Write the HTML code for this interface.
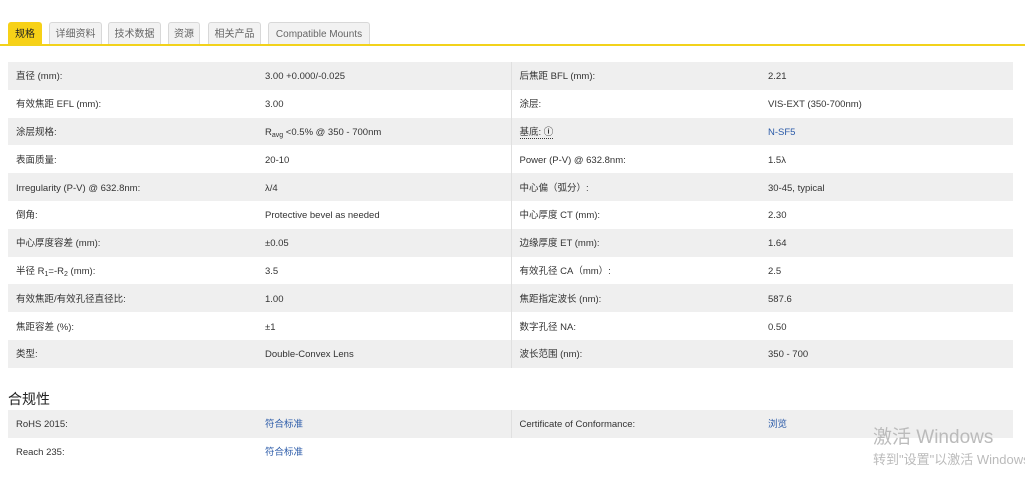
<!DOCTYPE html>
<html><head><meta charset="utf-8"><style>
body{margin:0;background:#fff;font-family:"Liberation Sans","Noto Sans CJK SC",sans-serif;font-size:9.5px;color:#333;width:1025px;height:488px;overflow:hidden;position:relative}
.tabs{position:absolute;top:22px;left:8px;height:23px}
.tab{position:absolute;top:0;height:22px;line-height:24px;background:#f2f2f2;border:1px solid #d8d8d8;border-bottom:none;border-radius:3px 3px 0 0;color:#666;font-size:10px;text-align:center;box-sizing:border-box}
.tab.a{background:#f7d117;border-color:#f7d117;color:#222}
.line{position:absolute;top:44px;left:0;width:1025px;height:2px;background:#f2d21b}
table{position:absolute;left:8px;width:1005px;border-collapse:collapse;table-layout:fixed}
td{height:27.8px;padding:3px 0 0 8px;box-sizing:border-box;white-space:nowrap;overflow:hidden;vertical-align:middle;line-height:12px}
sub{font-size:7px;vertical-align:-2px;line-height:0}
tr:nth-child(odd) td{background:#efefef}
td:nth-child(3){border-left:1px solid #e0e0e0}
a{color:#2a5aa8;text-decoration:none}
h3{position:absolute;left:8px;top:389px;margin:0;font-size:14px;font-weight:normal;color:#222}
.wm{position:absolute;left:873px;color:#bbb}
</style></head><body>
<div class="tabs">
<div class="tab a" style="left:0;width:34px">规格</div>
<div class="tab" style="left:41px;width:53px">详细资料</div>
<div class="tab" style="left:100px;width:53px">技术数据</div>
<div class="tab" style="left:160px;width:32px">资源</div>
<div class="tab" style="left:200px;width:53px">相关产品</div>
<div class="tab" style="left:260px;width:102px">Compatible Mounts</div>
</div>
<div class="line"></div>
<table style="top:62px">
<colgroup><col style="width:249px"><col style="width:254px"><col style="width:249px"><col></colgroup>
<tr><td>直径 (mm):</td><td>3.00 +0.000/-0.025</td><td>后焦距 BFL (mm):</td><td>2.21</td></tr>
<tr><td>有效焦距 EFL (mm):</td><td>3.00</td><td>涂层:</td><td>VIS-EXT (350-700nm)</td></tr>
<tr><td>涂层规格:</td><td>R<sub>avg</sub> &lt;0.5% @ 350 - 700nm</td><td><span style="border-bottom:1px dotted #333">基底: <b>ⓘ</b></span></td><td><a>N-SF5</a></td></tr>
<tr><td>表面质量:</td><td>20-10</td><td>Power (P-V) @ 632.8nm:</td><td>1.5λ</td></tr>
<tr><td>Irregularity (P-V) @ 632.8nm:</td><td>λ/4</td><td>中心偏（弧分）:</td><td>30-45, typical</td></tr>
<tr><td>倒角:</td><td>Protective bevel as needed</td><td>中心厚度 CT (mm):</td><td>2.30</td></tr>
<tr><td>中心厚度容差 (mm):</td><td>±0.05</td><td>边缘厚度 ET (mm):</td><td>1.64</td></tr>
<tr><td>半径 R<sub>1</sub>=-R<sub>2</sub> (mm):</td><td>3.5</td><td>有效孔径 CA（mm）:</td><td>2.5</td></tr>
<tr><td>有效焦距/有效孔径直径比:</td><td>1.00</td><td>焦距指定波长 (nm):</td><td>587.6</td></tr>
<tr><td>焦距容差 (%):</td><td>±1</td><td>数字孔径 NA:</td><td>0.50</td></tr>
<tr><td>类型:</td><td>Double-Convex Lens</td><td>波长范围 (nm):</td><td>350 - 700</td></tr>
</table>
<h3>合规性</h3>
<table style="top:410px">
<colgroup><col style="width:249px"><col style="width:254px"><col style="width:249px"><col></colgroup>
<tr><td>RoHS 2015:</td><td><a>符合标准</a></td><td>Certificate of Conformance:</td><td><a>浏览</a></td></tr>
<tr><td>Reach 235:</td><td><a>符合标准</a></td><td style="border:none"></td><td></td></tr>
</table>
<div class="wm" style="top:422px;font-size:19px">激活 Windows</div>
<div class="wm" style="top:449px;font-size:13px;white-space:nowrap">转到"设置"以激活 Windows</div>
</body></html>
